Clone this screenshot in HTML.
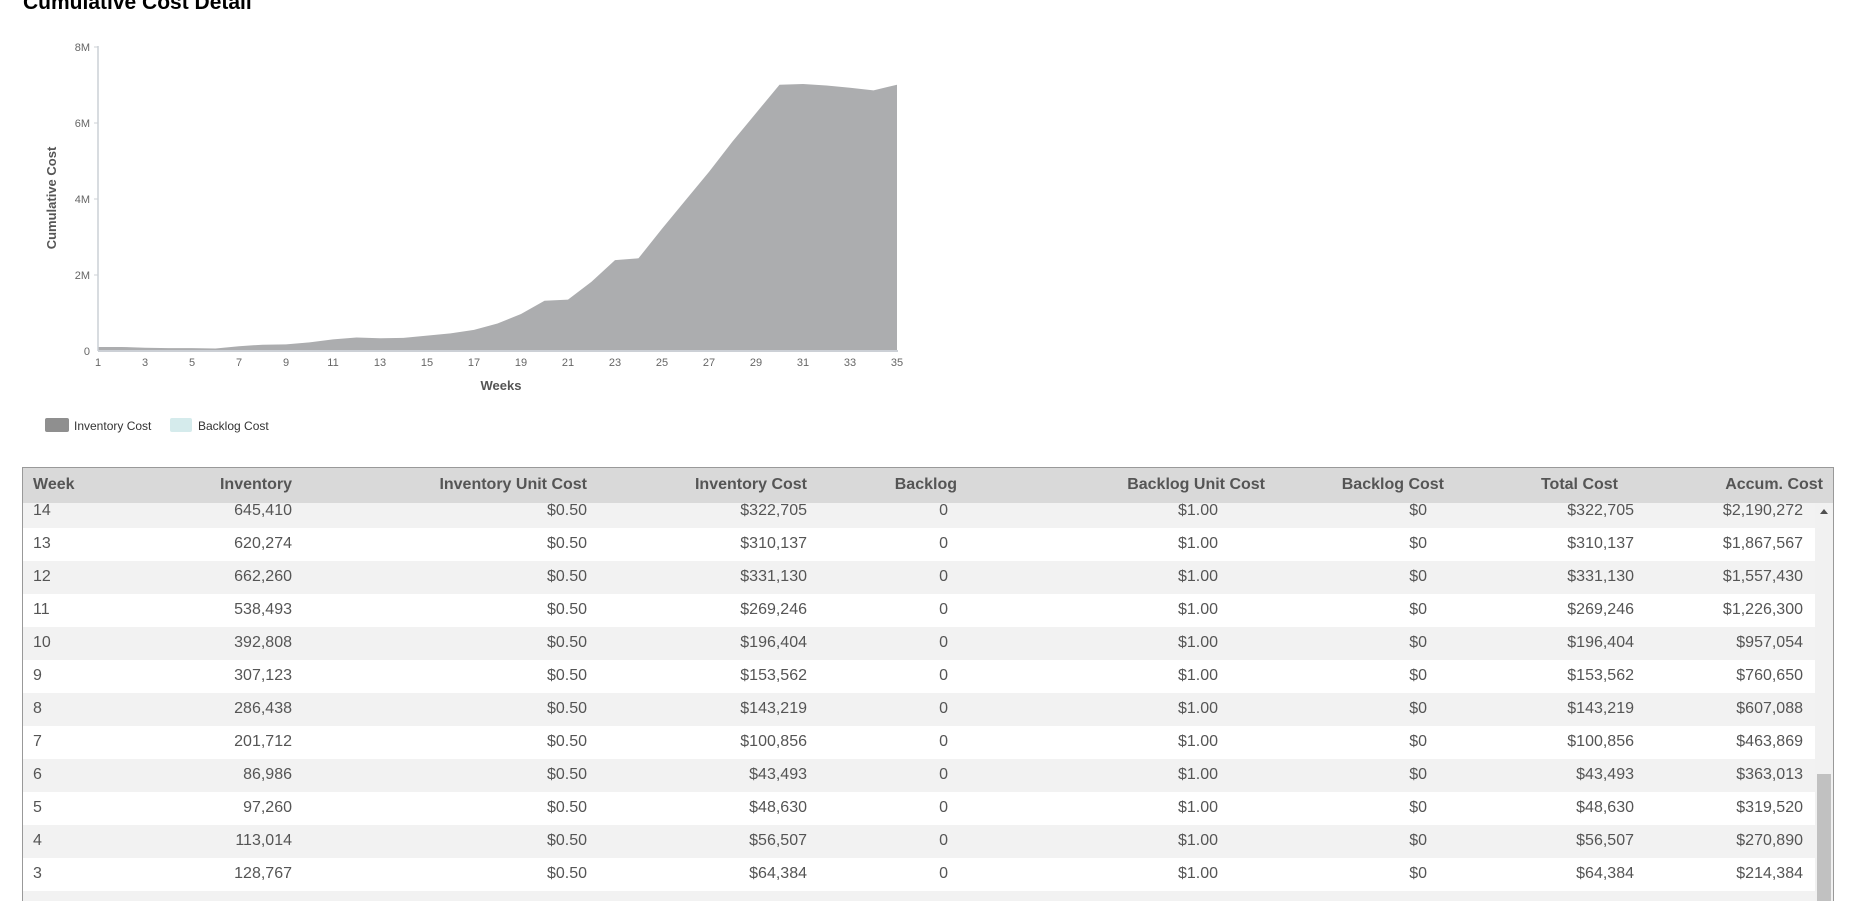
<!DOCTYPE html>
<html><head><meta charset="utf-8"><style>
html,body{margin:0;padding:0;background:#fff;width:1851px;height:901px;overflow:hidden;font-family:"Liberation Sans",Arial,sans-serif;}
.title{position:absolute;left:23px;top:-9px;font-size:21px;font-weight:bold;color:#000;}
.tbl{position:absolute;left:22px;top:467px;width:1810px;height:433px;border:1px solid #999;border-bottom:none;overflow:hidden;}
.hdr{position:absolute;left:0;top:0;width:1812px;height:35px;background:#d9d9d9;z-index:2;}
.c{position:absolute;width:240px;text-align:right;font-size:16px;color:#555;line-height:20px;}
.hdr .c{font-weight:bold;top:7px;}
.body{position:absolute;left:0;top:35px;width:1792px;height:398px;overflow:hidden;}
.row{position:absolute;left:0;width:1792px;height:33px;}
.row .c{top:6px;}
.g{background:#f2f2f2;}
.track{position:absolute;left:1792px;top:35px;width:19px;height:398px;background:#f1f1f1;}
.thumb{position:absolute;left:2px;top:271px;width:14px;height:127px;background:#c1c1c1;}
</style></head><body>
<div class="title">Cumulative Cost Detail</div>
<svg style="position:absolute;left:0;top:0" width="950" height="450">
<g transform="translate(98,350) scale(23.5,-37.9)">
<polygon fill="#acadaf" points="0,0 0,0.08 1,0.08 2,0.06 3,0.05 4,0.05 5,0.04 6,0.1 7,0.14 8,0.15 9,0.2 10,0.28 11,0.33 12,0.31 13,0.32 14,0.38 15,0.44 16,0.53 17,0.7 18,0.95 19,1.3 20,1.33 21,1.8 22,2.37 23,2.42 24,3.2 25,3.95 26,4.7 27,5.5 28,6.25 29,7.0 30,7.02 31,6.98 32,6.92 33,6.85 34,7.0 34,0"/>
</g>
<line x1="98" y1="46" x2="98" y2="351" stroke="#ccd0d6" stroke-width="1.5"/>
<line x1="98" y1="351" x2="898" y2="351" stroke="#ccd0d6" stroke-width="2"/>
<g stroke="#ccd0d6" stroke-width="1">
<line x1="94" y1="47" x2="98" y2="47"/><line x1="94" y1="123" x2="98" y2="123"/><line x1="94" y1="199" x2="98" y2="199"/><line x1="94" y1="275" x2="98" y2="275"/>
</g>
<g font-size="11" fill="#666" text-anchor="end" font-family="Liberation Sans,sans-serif">
<text x="90" y="51">8M</text><text x="90" y="127">6M</text><text x="90" y="203">4M</text><text x="90" y="279">2M</text><text x="90" y="355">0</text>
</g>
<g font-size="11" fill="#666" text-anchor="middle" font-family="Liberation Sans,sans-serif">
<text x="98" y="366">1</text><text x="145" y="366">3</text><text x="192" y="366">5</text><text x="239" y="366">7</text><text x="286" y="366">9</text><text x="333" y="366">11</text><text x="380" y="366">13</text><text x="427" y="366">15</text><text x="474" y="366">17</text><text x="521" y="366">19</text><text x="568" y="366">21</text><text x="615" y="366">23</text><text x="662" y="366">25</text><text x="709" y="366">27</text><text x="756" y="366">29</text><text x="803" y="366">31</text><text x="850" y="366">33</text><text x="897" y="366">35</text>
</g>
<text x="501" y="390" font-size="13" font-weight="bold" fill="#555" text-anchor="middle" font-family="Liberation Sans,sans-serif">Weeks</text>
<text transform="translate(56,198) rotate(-90)" font-size="13" font-weight="bold" fill="#555" text-anchor="middle" font-family="Liberation Sans,sans-serif">Cumulative Cost</text>
<rect x="45" y="418" width="24" height="14" rx="2" fill="#8f8f8f"/>
<text x="74" y="430" font-size="12" fill="#333" font-family="Liberation Sans,sans-serif">Inventory Cost</text>
<rect x="170" y="418" width="22" height="14" rx="2" fill="#d5ebec"/>
<text x="198" y="430" font-size="12" fill="#333" font-family="Liberation Sans,sans-serif">Backlog Cost</text>
</svg>
<div class="tbl">
<div class="hdr">
<div class="c" style="left:10px;text-align:left">Week</div>
<div class="c" style="left:29px">Inventory</div>
<div class="c" style="left:324px">Inventory Unit Cost</div>
<div class="c" style="left:544px">Inventory Cost</div>
<div class="c" style="left:694px">Backlog</div>
<div class="c" style="left:1002px">Backlog Unit Cost</div>
<div class="c" style="left:1181px">Backlog Cost</div>
<div class="c" style="left:1355px">Total Cost</div>
<div class="c" style="left:1560px">Accum. Cost</div>
</div>
<div class="body" id="b"></div>
<div class="track"><div style="position:absolute;left:5px;top:6px;width:0;height:0;border-left:4px solid transparent;border-right:4px solid transparent;border-bottom:5px solid #505050"></div><div class="thumb"></div></div>
</div>
<script>
var d=[["14","645,410","$322,705","$2,190,272"],["13","620,274","$310,137","$1,867,567"],["12","662,260","$331,130","$1,557,430"],["11","538,493","$269,246","$1,226,300"],["10","392,808","$196,404","$957,054"],["9","307,123","$153,562","$760,650"],["8","286,438","$143,219","$607,088"],["7","201,712","$100,856","$463,869"],["6","86,986","$43,493","$363,013"],["5","97,260","$48,630","$319,520"],["4","113,014","$56,507","$270,890"],["3","128,767","$64,384","$214,384"]];
var h="";
d.forEach(function(r,i){
h+='<div class="row'+(i%2==0?' g':'')+'" style="top:'+(-8+i*33)+'px">'+
'<div class="c" style="left:10px;text-align:left">'+r[0]+'</div>'+
'<div class="c" style="left:29px">'+r[1]+'</div>'+
'<div class="c" style="left:324px">$0.50</div>'+
'<div class="c" style="left:544px">'+r[2]+'</div>'+
'<div class="c" style="left:685px">0</div>'+
'<div class="c" style="left:955px">$1.00</div>'+
'<div class="c" style="left:1164px">$0</div>'+
'<div class="c" style="left:1371px">'+r[2]+'</div>'+
'<div class="c" style="left:1540px">'+r[3]+'</div></div>';
});
h+='<div class="row g" style="top:'+(-8+12*33)+'px"></div>';
document.getElementById("b").innerHTML=h;
</script>
</body></html>
